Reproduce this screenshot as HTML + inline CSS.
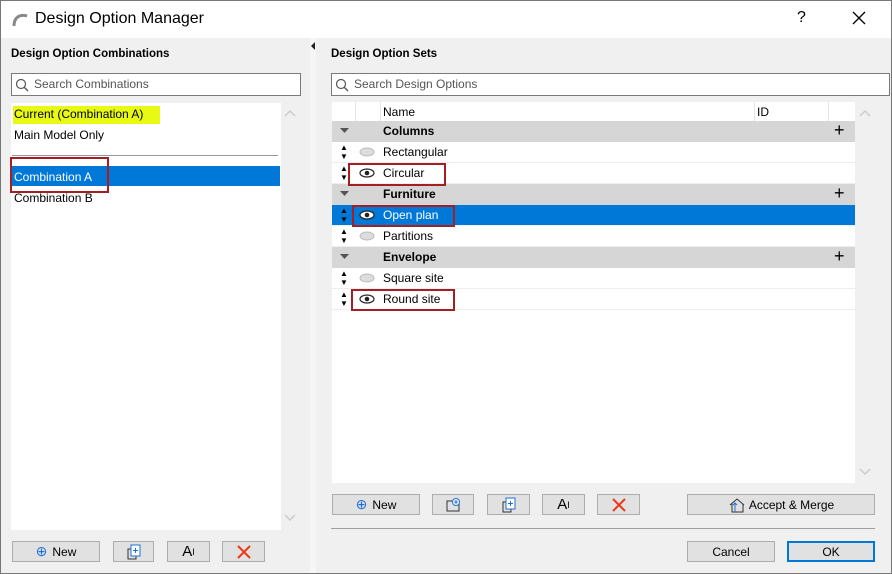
<!DOCTYPE html>
<html><head><style>
*{box-sizing:border-box;margin:0;padding:0}
body{width:892px;height:574px;overflow:hidden;font-family:"Liberation Sans",sans-serif;font-size:12px;color:#000;background:#fff}
.win{position:absolute;left:0;top:0;width:892px;height:574px;background:#f0f0f0}
.frame{position:absolute;left:0;top:0;width:892px;height:574px;border:1px solid #777;pointer-events:none}
.abs{position:absolute}
.title{left:0;top:0;width:892px;height:38px;background:#fff}
.btn{position:absolute;height:21px;border:1px solid #adadad;background:#e1e1e1;display:flex;align-items:center;justify-content:center;font-size:12px}
.search{position:absolute;height:23px;border:1px solid #7a7a7a;background:#fff;color:#555;font-size:12px;padding-left:22px;line-height:21px}
.row{position:absolute;left:332px;width:523px;height:21px;line-height:20px;border-bottom:1px solid #eee;background:#fff}
.grp{background:#d6d6d6;font-weight:bold;border-bottom:none}
.red{position:absolute;border:2px solid #a31f24}
.ud{position:absolute;left:8px;top:1px;font-size:8px;line-height:9px}
</style></head><body>
<div class="win">
<div class="abs title"></div>
<svg class="abs" style="left:12px;top:11px" width="18" height="16"><path d="M2 15 C2 6 8 3 15 5" stroke="#888" stroke-width="3" fill="none"/></svg>
<div class="abs" style="left:35px;top:10px;font-size:16px;color:#000">Design Option Manager</div>
<div class="abs" style="left:797px;top:9px;font-size:16px">?</div>
<svg class="abs" style="left:852px;top:11px" width="14" height="14"><path d="M1 1L13 13M13 1L1 13" stroke="#000" stroke-width="1.3"/></svg>

<div class="abs" style="left:310px;top:38px;width:6px;height:535px;background:#f6f6f6"></div>
<svg class="abs" style="left:310px;top:42px" width="6" height="8"><path d="M5 0L1 4L5 8Z" fill="#222"/></svg>

<div class="abs" style="left:11px;top:48px;font-weight:bold;font-size:11.5px">Design Option Combinations</div>
<div class="search" style="left:11px;top:73px;width:290px">Search Combinations</div>
<svg class="abs" style="left:15px;top:78px" width="14" height="14"><circle cx="6" cy="6" r="4.5" stroke="#555" fill="none" stroke-width="1.2"/><path d="M9.5 9.5L13 13" stroke="#555" stroke-width="1.3"/></svg>
<div class="abs" style="left:11px;top:103px;width:270px;height:427px;background:#fff"></div>
<div class="abs" style="left:13px;top:106px;width:147px;height:18px;background:#e8fa14"></div>
<div class="abs" style="left:14px;top:107px">Current (Combination A)</div>
<div class="abs" style="left:14px;top:128px">Main Model Only</div>
<div class="abs" style="left:12px;top:155px;width:266px;height:1px;background:#999"></div>
<div class="abs" style="left:11px;top:166px;width:269px;height:20px;background:#0078d7"></div>
<div class="abs" style="left:14px;top:170px;color:#fff">Combination A</div>
<div class="abs" style="left:14px;top:191px">Combination B</div>
<div class="red" style="left:10px;top:157px;width:99px;height:36px"></div>
<svg class="abs" style="left:284px;top:109px" width="12" height="8"><path d="M1 7L6 2L11 7" stroke="#ccc" stroke-width="1.5" fill="none"/></svg>
<svg class="abs" style="left:284px;top:514px" width="12" height="8"><path d="M1 1L6 6L11 1" stroke="#ccc" stroke-width="1.5" fill="none"/></svg>

<div class="btn" style="left:12px;top:541px;width:88px"><span style="color:#1e6fd9;font-size:14px;margin-right:5px">⊕</span>New</div>
<div class="btn" style="left:113px;top:541px;width:41px"><svg width="16" height="16"><rect x="2" y="5" width="8" height="10" fill="none" stroke="#333"/><rect x="5" y="1" width="9" height="11" fill="#fff" stroke="#1e6fd9"/><path d="M9.5 4v5M7 6.5h5" stroke="#1e6fd9"/></svg></div>
<div class="btn" style="left:167px;top:541px;width:43px;font-size:15px">A<sup style="font-size:9px">I</sup></div>
<div class="btn" style="left:222px;top:541px;width:43px"><svg width="14" height="14"><path d="M1 1L13 13M13 1L1 13" stroke="#e8391a" stroke-width="2"/></svg></div>

<div class="abs" style="left:331px;top:48px;font-weight:bold;font-size:11.5px">Design Option Sets</div>
<div class="search" style="left:331px;top:73px;width:559px">Search Design Options</div>
<svg class="abs" style="left:335px;top:78px" width="14" height="14"><circle cx="6" cy="6" r="4.5" stroke="#555" fill="none" stroke-width="1.2"/><path d="M9.5 9.5L13 13" stroke="#555" stroke-width="1.3"/></svg>
<div class="abs" style="left:332px;top:102px;width:523px;height:381px;background:#fff"></div>
<div class="abs" style="left:355px;top:102px;width:1px;height:19px;background:#e5e5e5"></div>
<div class="abs" style="left:380px;top:102px;width:1px;height:19px;background:#e5e5e5"></div>
<div class="abs" style="left:754px;top:102px;width:1px;height:19px;background:#e5e5e5"></div>
<div class="abs" style="left:828px;top:102px;width:1px;height:19px;background:#e5e5e5"></div>
<div class="abs" style="left:383px;top:105px">Name</div>
<div class="abs" style="left:757px;top:105px">ID</div>

<div class="row grp" style="top:121px"><svg class="abs" style="left:8px;top:7px" width="9" height="6"><path d="M0 0H9L4.5 5Z" fill="#555"/></svg><span class="abs" style="left:51px">Columns</span><span class="abs" style="left:502px;font-size:18px;font-weight:normal;top:-1px">+</span></div>
<div class="row" style="top:142px"><span class="ud">▲<br>▼</span><svg class="abs" style="left:27px;top:5px" width="16" height="10"><ellipse cx="8" cy="5" rx="7" ry="4" fill="#ddd" stroke="#bbb"/></svg><span class="abs" style="left:51px">Rectangular</span></div>
<div class="row" style="top:163px"><span class="ud">▲<br>▼</span><svg class="abs" style="left:27px;top:5px" width="16" height="10"><ellipse cx="8" cy="5" rx="7" ry="4" fill="#fff" stroke="#222" stroke-width="1.2"/><circle cx="8" cy="5" r="2.3" fill="#222"/></svg><span class="abs" style="left:51px">Circular</span></div>
<div class="row grp" style="top:184px"><svg class="abs" style="left:8px;top:7px" width="9" height="6"><path d="M0 0H9L4.5 5Z" fill="#555"/></svg><span class="abs" style="left:51px">Furniture</span><span class="abs" style="left:502px;font-size:18px;font-weight:normal;top:-1px">+</span></div>
<div class="row" style="top:205px;background:#0078d7;color:#fff"><span class="ud" style="color:#000">▲<br>▼</span><svg class="abs" style="left:27px;top:5px" width="16" height="10"><ellipse cx="8" cy="5" rx="7" ry="4" fill="#fff" stroke="#222" stroke-width="1.2"/><circle cx="8" cy="5" r="2.3" fill="#222"/></svg><span class="abs" style="left:51px">Open plan</span></div>
<div class="row" style="top:226px"><span class="ud">▲<br>▼</span><svg class="abs" style="left:27px;top:5px" width="16" height="10"><ellipse cx="8" cy="5" rx="7" ry="4" fill="#ddd" stroke="#bbb"/></svg><span class="abs" style="left:51px">Partitions</span></div>
<div class="row grp" style="top:247px"><svg class="abs" style="left:8px;top:7px" width="9" height="6"><path d="M0 0H9L4.5 5Z" fill="#555"/></svg><span class="abs" style="left:51px">Envelope</span><span class="abs" style="left:502px;font-size:18px;font-weight:normal;top:-1px">+</span></div>
<div class="row" style="top:268px"><span class="ud">▲<br>▼</span><svg class="abs" style="left:27px;top:5px" width="16" height="10"><ellipse cx="8" cy="5" rx="7" ry="4" fill="#ddd" stroke="#bbb"/></svg><span class="abs" style="left:51px">Square site</span></div>
<div class="row" style="top:289px"><span class="ud">▲<br>▼</span><svg class="abs" style="left:27px;top:5px" width="16" height="10"><ellipse cx="8" cy="5" rx="7" ry="4" fill="#fff" stroke="#222" stroke-width="1.2"/><circle cx="8" cy="5" r="2.3" fill="#222"/></svg><span class="abs" style="left:51px">Round site</span></div>
<div class="red" style="left:348px;top:163px;width:98px;height:23px"></div>
<div class="red" style="left:352px;top:205px;width:103px;height:22px"></div>
<div class="red" style="left:351px;top:289px;width:104px;height:22px"></div>
<svg class="abs" style="left:859px;top:109px" width="12" height="8"><path d="M1 7L6 2L11 7" stroke="#ccc" stroke-width="1.5" fill="none"/></svg>
<svg class="abs" style="left:859px;top:468px" width="12" height="8"><path d="M1 1L6 6L11 1" stroke="#ccc" stroke-width="1.5" fill="none"/></svg>

<div class="btn" style="left:332px;top:494px;width:88px"><span style="color:#1e6fd9;font-size:14px;margin-right:5px">⊕</span>New</div>
<div class="btn" style="left:432px;top:494px;width:42px"><svg width="16" height="16"><rect x="2" y="4" width="12" height="10" fill="none" stroke="#333"/><circle cx="11" cy="5" r="3.5" fill="#fff" stroke="#1e6fd9"/><path d="M11 3v4M9 5h4" stroke="#1e6fd9"/></svg></div>
<div class="btn" style="left:487px;top:494px;width:43px"><svg width="16" height="16"><rect x="2" y="5" width="8" height="10" fill="none" stroke="#333"/><rect x="5" y="1" width="9" height="11" fill="#fff" stroke="#1e6fd9"/><path d="M9.5 4v5M7 6.5h5" stroke="#1e6fd9"/></svg></div>
<div class="btn" style="left:542px;top:494px;width:43px;font-size:15px">A<sup style="font-size:9px">I</sup></div>
<div class="btn" style="left:597px;top:494px;width:43px"><svg width="14" height="14"><path d="M1 1L13 13M13 1L1 13" stroke="#e8391a" stroke-width="2"/></svg></div>
<div class="btn" style="left:687px;top:494px;width:188px"><svg width="18" height="16" style="margin-right:3px"><path d="M2 8L9 2L16 8M4 7v8h11V7" stroke="#333" fill="none"/><path d="M7 15V6M5 8l2-2 2 2" stroke="#1e6fd9" fill="none"/></svg>Accept &amp; Merge</div>
<div class="abs" style="left:331px;top:528px;width:544px;height:1px;background:#a0a0a0"></div>
<div class="btn" style="left:687px;top:541px;width:88px">Cancel</div>
<div class="btn" style="left:787px;top:541px;width:88px;border:2px solid #0078d7">OK</div>
</div>
<div class="frame"></div>
</body></html>
